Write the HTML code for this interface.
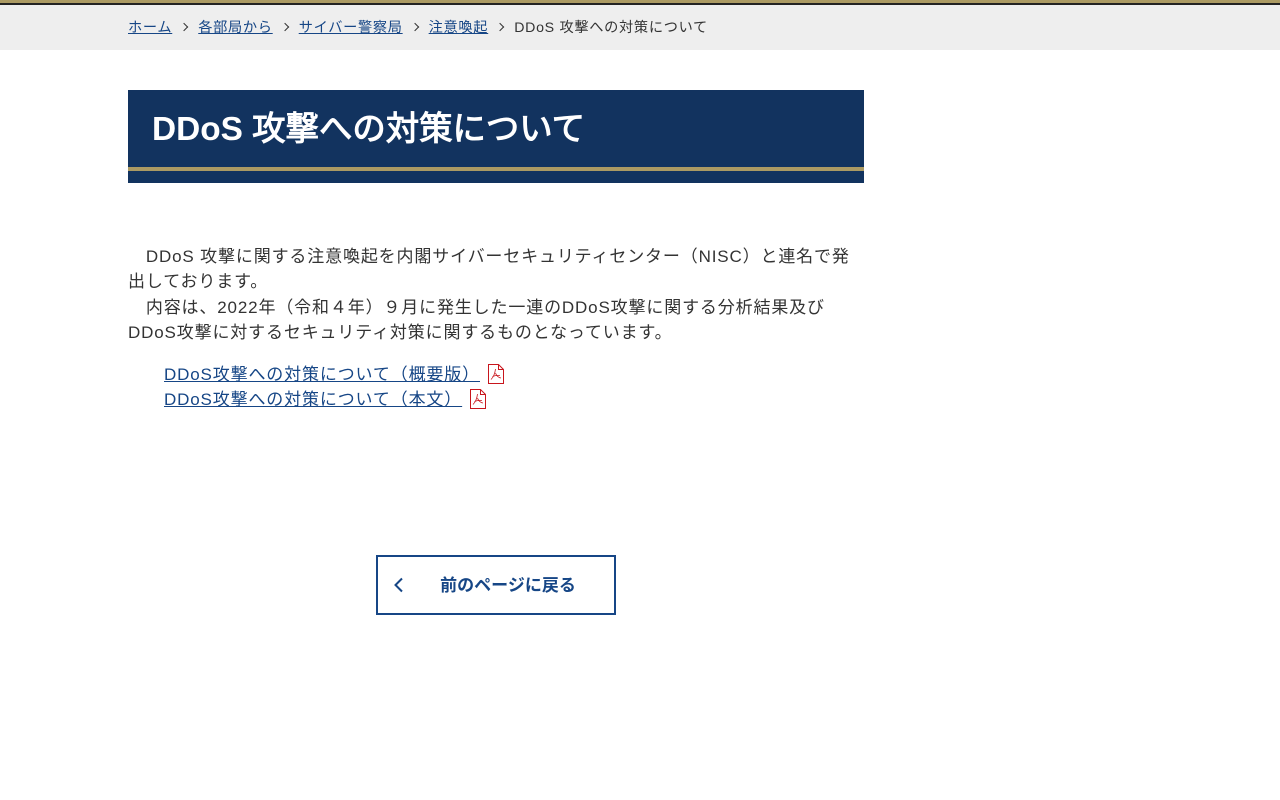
<!DOCTYPE html>
<html lang="ja">
<head>
<meta charset="utf-8">
<title>DDoS 攻撃への対策について</title>
<style>
html,body{margin:0;padding:0;background:#fff;width:1280px;height:800px;overflow:hidden}
body{font-family:"Liberation Sans","Noto Sans CJK JP",sans-serif;color:#333;position:relative}
a{color:#164686;text-decoration:underline}
.top{position:absolute;left:0;top:0;width:1280px;height:5px;box-sizing:border-box;background:#ab9a63;border-bottom:2px solid #222}
.crumb{position:absolute;left:0;top:5px;width:1280px;height:45px;background:#eee}
.crumb div{position:absolute;top:14px;left:128px;font-size:14.2px;line-height:18px;letter-spacing:.7px;white-space:nowrap}
.sep{display:inline-block;width:6px;height:6px;border-top:1.7px solid #333;border-right:1.7px solid #333;transform:rotate(45deg);box-sizing:border-box;margin:0 11px 2px 9px}
h1{position:absolute;left:128px;top:90px;width:736px;height:93px;margin:0;background:#12335f;color:#fff;box-sizing:border-box;font-family:"Liberation Sans","WenQuanYi Zen Hei",sans-serif;font-size:33.4px;line-height:40px;padding:20px 24px 0;font-weight:bold}
h1:after{content:"";position:absolute;left:0;top:77px;width:736px;height:4px;background:#ab9a63}
.txt{position:absolute;left:128px;top:243.5px;width:736px;font-size:17px;line-height:25.5px;letter-spacing:.85px;margin:0}
.links{position:absolute;left:164px;top:362px;font-size:17px;line-height:25px;letter-spacing:.85px;white-space:nowrap}
.links svg{vertical-align:-4px;margin-left:8px}
.btn{position:absolute;left:376px;top:555px;width:240px;height:60px;box-sizing:border-box;border:2px solid #164686;color:#164686;font-weight:bold;font-size:17px;line-height:58px;text-decoration:none;text-align:center;padding-left:24px}
.btn svg{position:absolute;left:15px;top:20px}
</style>
</head>
<body>
<div class="top"></div>
<div class="crumb"><div><a href="#">ホーム</a><span class="sep"></span><a href="#">各部局から</a><span class="sep"></span><a href="#">サイバー警察局</a><span class="sep"></span><a href="#">注意喚起</a><span class="sep"></span>DDoS 攻撃への対策について</div></div>
<h1>DDoS 攻撃への対策について</h1>
<p class="txt">　DDoS 攻撃に関する注意喚起を内閣サイバーセキュリティセンター（NISC）と連名で発出しております。<br>　内容は、2022年（令和４年）９月に発生した一連のDDoS攻撃に関する分析結果及びDDoS攻撃に対するセキュリティ対策に関するものとなっています。</p>
<div class="links">
<a href="#">DDoS攻撃への対策について（概要版）</a><svg width="16" height="20" viewBox="0 0 16 20" fill="none" stroke="#c8161d"><path d="M.5.5H10.5L15.5 5.5V19.5H.5Z M10.5.5V5.5H15.5"/><path d="M7.5 5C7 9 5.5 13 3 15.5M7.5 9C8.5 12 10 13.5 13 14M4.5 12.5C7 11.5 9.5 11.2 12 11.5" stroke-width=".8"/></svg><br>
<a href="#">DDoS攻撃への対策について（本文）</a><svg width="16" height="20" viewBox="0 0 16 20" fill="none" stroke="#c8161d"><path d="M.5.5H10.5L15.5 5.5V19.5H.5Z M10.5.5V5.5H15.5"/><path d="M7.5 5C7 9 5.5 13 3 15.5M7.5 9C8.5 12 10 13.5 13 14M4.5 12.5C7 11.5 9.5 11.2 12 11.5" stroke-width=".8"/></svg>
</div>
<a class="btn" href="#"><svg width="12" height="16" viewBox="0 0 12 16" fill="none" stroke="#164686" stroke-width="2"><path d="M9 1.5L2.5 8L9 14.5"/></svg>前のページに戻る</a>
</body>
</html>
